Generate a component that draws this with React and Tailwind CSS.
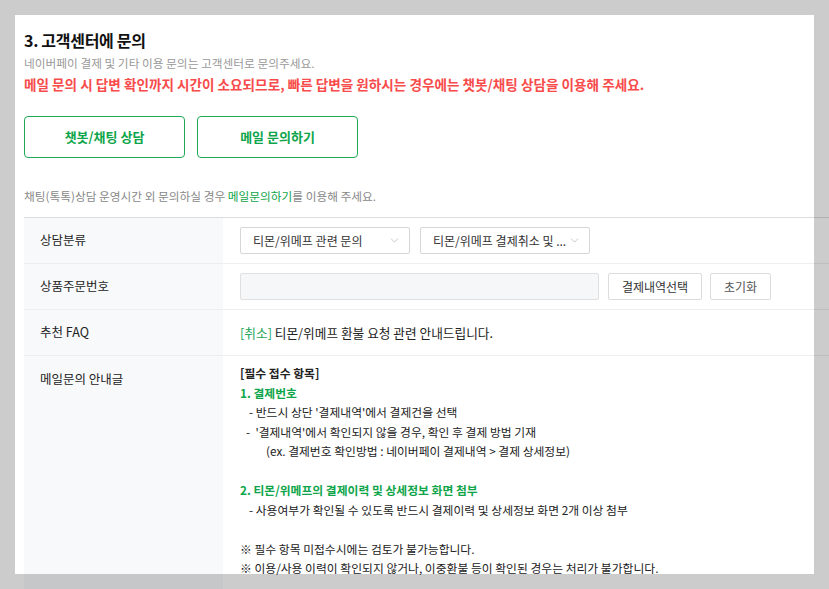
import { ChevronDown } from "lucide-react";

const font = "font-['Noto_Sans_CJK_KR','Noto_Sans',sans-serif]";

function Select({ label }) {
  return (
    <div className="flex h-[27px] w-[170px] items-center justify-between rounded-[2px] border border-[#d6d6d6] bg-white pl-[12px] pr-[8px]">
      <span className="truncate text-[12px] text-[#333]">{label}</span>
      <ChevronDown size={13} strokeWidth={1.2} className="shrink-0 text-[#aaa]" />
    </div>
  );
}

function Row({ label, children, tall = false }) {
  return (
    <div
      className={`flex border-b border-[#eeeeee] ${tall ? "min-h-[300px]" : "h-[46px]"}`}
    >
      <div
        className={`flex w-[199px] shrink-0 bg-[#f8f9fa] pl-[16px] text-[12.5px] text-[#222] ${
          tall ? "items-start pt-[14px]" : "items-center"
        }`}
      >
        {label}
      </div>
      <div className={`flex flex-1 pl-[17px] ${tall ? "items-start" : "items-center"}`}>
        {children}
      </div>
    </div>
  );
}

export default function App() {
  return (
    <div className={`relative h-[589px] w-full overflow-hidden bg-white ${font}`}>
      <div className="pl-[24px] pt-[28px]">
        <h2 className="h-[24px] text-[16px] font-bold leading-[24px] tracking-[-0.3px] text-[#111]">
          3. 고객센터에 문의
        </h2>
        <p className="mt-[2px] text-[11.7px] leading-[18px] text-[#999]">
          네이버페이 결제 및 기타 이용 문의는 고객센터로 문의주세요.
        </p>
        <p className="mt-[3px] text-[13.6px] font-bold leading-[18px] text-[#f84b4b]">
          메일 문의 시 답변 확인까지 시간이 소요되므로, 빠른 답변을 원하시는 경우에는 챗봇/채팅 상담을 이용해 주세요.
        </p>

        <div className="mt-[23px] flex gap-[12px]">
          <button className="h-[42px] w-[161px] rounded-[4px] border border-[#1fa855] text-[13px] font-bold text-[#0ea54a]">
            챗봇/채팅 상담
          </button>
          <button className="h-[42px] w-[161px] rounded-[4px] border border-[#1fa855] text-[13px] font-bold text-[#0ea54a]">
            메일 문의하기
          </button>
        </div>

        <p className="mt-[30px] text-[11.7px] leading-[16px] text-[#888]">
          채팅(톡톡)상담 운영시간 외 문의하실 경우{" "}
          <span className="text-[#0ea54a]">메일문의하기</span>를 이용해 주세요.
        </p>

        <div className="mt-[13px] border-t border-[#dddddd]">
          <Row label="상담분류">
            <div className="flex gap-[10px]">
              <Select label="티몬/위메프 관련 문의" />
              <Select label="티몬/위메프 결제취소 및 ..." />
            </div>
          </Row>
          <Row label="상품주문번호">
            <div className="flex items-center">
              <div className="h-[27px] w-[359px] rounded-[2px] border border-[#e0e0e0] bg-[#f6f7f9]" />
              <button className="ml-[9px] h-[27px] w-[94px] rounded-[2px] border border-[#dcdcdc] bg-white text-[12px] text-[#333]">
                결제내역선택
              </button>
              <button className="ml-[8px] h-[27px] w-[61px] rounded-[2px] border border-[#dcdcdc] bg-white text-[12px] text-[#555]">
                초기화
              </button>
            </div>
          </Row>
          <Row label="추천 FAQ">
            <p className="text-[12.7px] text-[#222]">
              <span className="text-[#22a55a]">[취소]</span> 티몬/위메프 환불 요청 관련 안내드립니다.
            </p>
          </Row>
          <Row label="메일문의 안내글" tall>
            <div className="pt-[7px] text-[11.8px] leading-[19.5px] text-[#222]">
              <p className="font-bold">[필수 접수 항목]</p>
              <p className="font-bold text-[#0ea54a]">1. 결제번호</p>
              <p className="pl-[9px]">- 반드시 상단 '결제내역'에서 결제건을 선택</p>
              <p className="pl-[6px]">-&nbsp; '결제내역'에서 확인되지 않을 경우, 확인 후 결제 방법 기재</p>
              <p className="pl-[26px]">(ex. 결제번호 확인방법 : 네이버페이 결제내역 &gt; 결제 상세정보)</p>
              <p>&nbsp;</p>
              <p className="font-bold text-[#0ea54a]">2. 티몬/위메프의 결제이력 및 상세정보 화면 첨부</p>
              <p className="pl-[9px]">- 사용여부가 확인될 수 있도록 반드시 결제이력 및 상세정보 화면 2개 이상 첨부</p>
              <p>&nbsp;</p>
              <p>※ 필수 항목 미접수시에는 검토가 불가능합니다.</p>
              <p>※ 이용/사용 이력이 확인되지 않거나, 이중환불 등이 확인된 경우는 처리가 불가합니다.</p>
            </div>
          </Row>
        </div>
      </div>

      {/* dim overlay around the panel */}
      <div className="absolute left-0 right-0 top-0 h-[15px] bg-black/20" />
      <div className="absolute bottom-[15px] left-0 top-[15px] w-[15px] bg-black/20" />
      <div className="absolute bottom-[15px] right-0 top-[15px] w-[15px] bg-black/20" />
      <div className="absolute bottom-0 left-0 right-0 h-[15px] bg-black/20" />
    </div>
  );
}
